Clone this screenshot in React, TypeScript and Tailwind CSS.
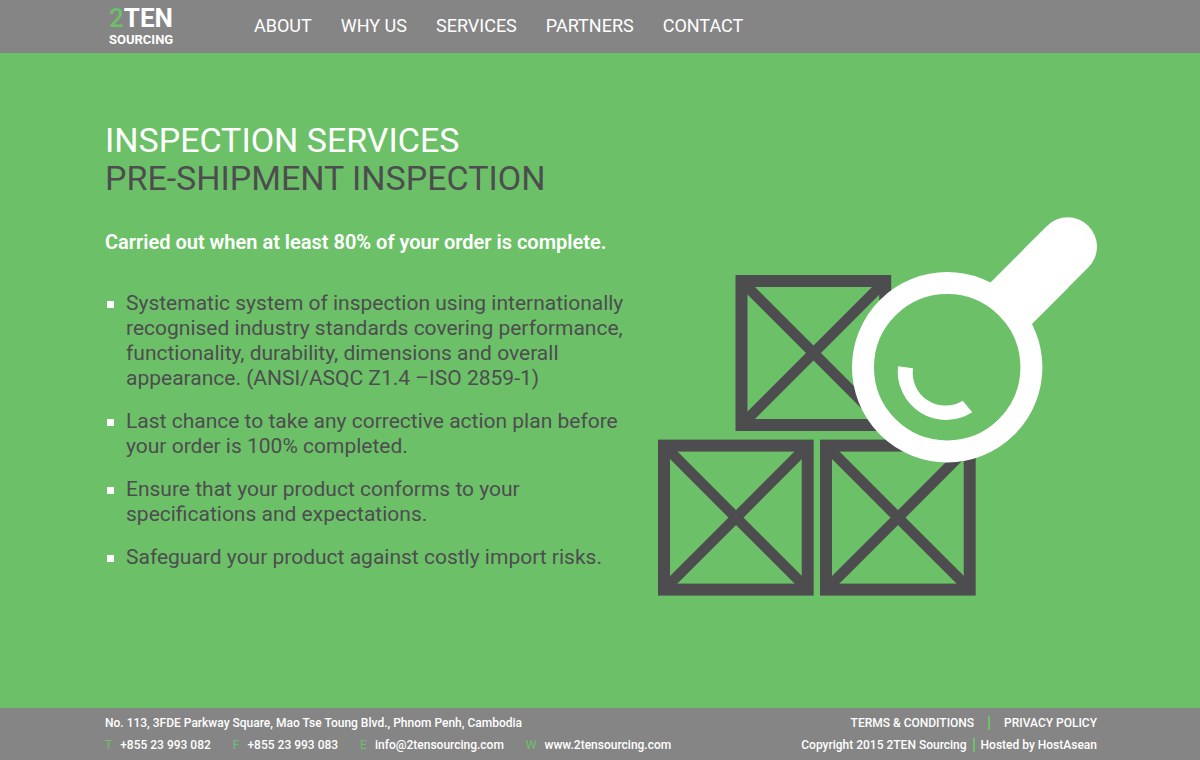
const navItems = ["About", "Why us", "Services", "Partners", "Contact"];

const points = [
  "Systematic system of inspection using internationally recognised industry standards covering performance, functionality, durability, dimensions and overall appearance. (ANSI/ASQC Z1.4 –ISO 2859-1)",
  "Last chance to take any corrective action plan before your order is 100% completed.",
  "Ensure that your product conforms to your specifications and expectations.",
  "Safeguard your product against costly import risks.",
];

const contacts = [
  { label: "T", value: "+855 23 993 082", href: "tel:+85523993082" },
  { label: "F", value: "+855 23 993 083", href: "tel:+85523993083" },
  { label: "E", value: "info@2tensourcing.com", href: "mailto:info@2tensourcing.com" },
  { label: "W", value: "www.2tensourcing.com", href: "#home" },
];

const container = "mx-auto w-full max-w-5xl pl-[17px] pr-[15px]";

const Logo = () => (
  <a href="#home" className="flex w-[149px] flex-col pl-1 font-bold">
    <span className="text-[26px] leading-[27px]">
      <span className="font-medium text-[#6cc168]">2</span>TEN
    </span>
    <span className="text-[13px] leading-4">SOURCING</span>
  </a>
);

const Header = () => (
  <header className="bg-[#858585] text-white">
    <div className={`${container} flex min-h-[53px] flex-wrap items-center`}>
      <Logo />
      <nav className="flex flex-wrap gap-x-[29px] pb-0.5 text-lg uppercase">
        {navItems.map((item) => (
          <a key={item} href={`#${item.toLowerCase().replace(" ", "-")}`} className="hover:text-[#6cc168]">
            {item}
          </a>
        ))}
      </nav>
    </div>
  </header>
);

const Crate = ({ x, y }: { x: number; y: number }) => (
  <g transform={`translate(${x} ${y})`} fill="none" stroke="#4d4d4f">
    <rect x="6" y="6" width="143.7" height="144" strokeWidth="12" />
    <path d="M10 10 146 146M146 10 10 146" strokeWidth="10.6" />
  </g>
);

const InspectionArt = () => (
  <svg viewBox="658 217 439 379" className="w-full" role="img" aria-label="Crates under a magnifying glass">
    <Crate x={735.5} y={275} />
    <Crate x={658} y={439.6} />
    <Crate x={820} y={439.6} />
    <circle cx="947.2" cy="367.3" r="84.2" fill="#6cc168" stroke="#fff" strokeWidth="22" />
    <path d="M1008 306.5 1047.5 267" stroke="#fff" strokeWidth="58.6" />
    <path d="M1047 267.3 1067.7 246.6" stroke="#fff" strokeWidth="58.6" strokeLinecap="round" />
    <path
      d="M898 366.3A48.5 48.5 0 0 0 972.3 412.3L962.7 400.7A32.8 32.8 0 0 1 913 368.3Z"
      fill="#fff"
    />
  </svg>
);

const Footer = () => (
  <footer className="bg-[#858585] py-1 text-xs leading-[22px] font-medium text-white">
    <div className={`${container} flex flex-wrap justify-between gap-x-6`}>
      <div>
        <p>No. 113, 3FDE Parkway Square, Mao Tse Toung Blvd., Phnom Penh, Cambodia</p>
        <ul className="flex flex-wrap gap-x-[22px]">
          {contacts.map((c) => (
            <li key={c.label} className="flex gap-2">
              <span className="font-normal text-[#6cc168]">{c.label}</span>
              <a href={c.href}>{c.value}</a>
            </li>
          ))}
        </ul>
      </div>
      <div className="flex flex-col md:items-end">
        <div className="flex items-center gap-3.5">
          <a href="#terms">TERMS &amp; CONDITIONS</a>
          <span className="h-3.5 w-0.5 bg-[#6cc168]" />
          <a href="#privacy">PRIVACY POLICY</a>
        </div>
        <div className="flex items-center gap-1.5">
          <span>Copyright 2015 2TEN Sourcing</span>
          <span className="h-3.5 w-0.5 bg-[#6cc168]" />
          <a href="#host">Hosted by HostAsean</a>
        </div>
      </div>
    </div>
  </footer>
);

const App = () => {
  return (
    <div className="flex min-h-screen flex-col bg-[#6cc168] font-['Roboto',sans-serif]">
      <Header />
      <main className="flex-1 pt-[68px] pb-10">
        <div className={`${container} grid items-start gap-x-5 md:grid-cols-[1fr_439px]`}>
          <div>
            <h1 className="text-[34px] leading-[38px] whitespace-nowrap text-white uppercase">
              Inspection Services
              <span className="block text-[#4d4d4f]">Pre-shipment Inspection</span>
            </h1>
            <p className="mt-[33px] text-xl leading-[25px] font-semibold text-white">
              Carried out when at least 80% of your order is complete.
            </p>
            <ul className="mt-9 flex flex-col gap-[18px] text-[21px] leading-[25px] text-[#4d4d4f]">
              {points.map((point) => (
                <li key={point} className="flex gap-3">
                  <span className="mt-2.5 ml-0.5 size-[7px] shrink-0 bg-white" />
                  {point}
                </li>
              ))}
            </ul>
          </div>
          <div className="mt-24">
            <InspectionArt />
          </div>
        </div>
      </main>
      <Footer />
    </div>
  );
};

export default App;
